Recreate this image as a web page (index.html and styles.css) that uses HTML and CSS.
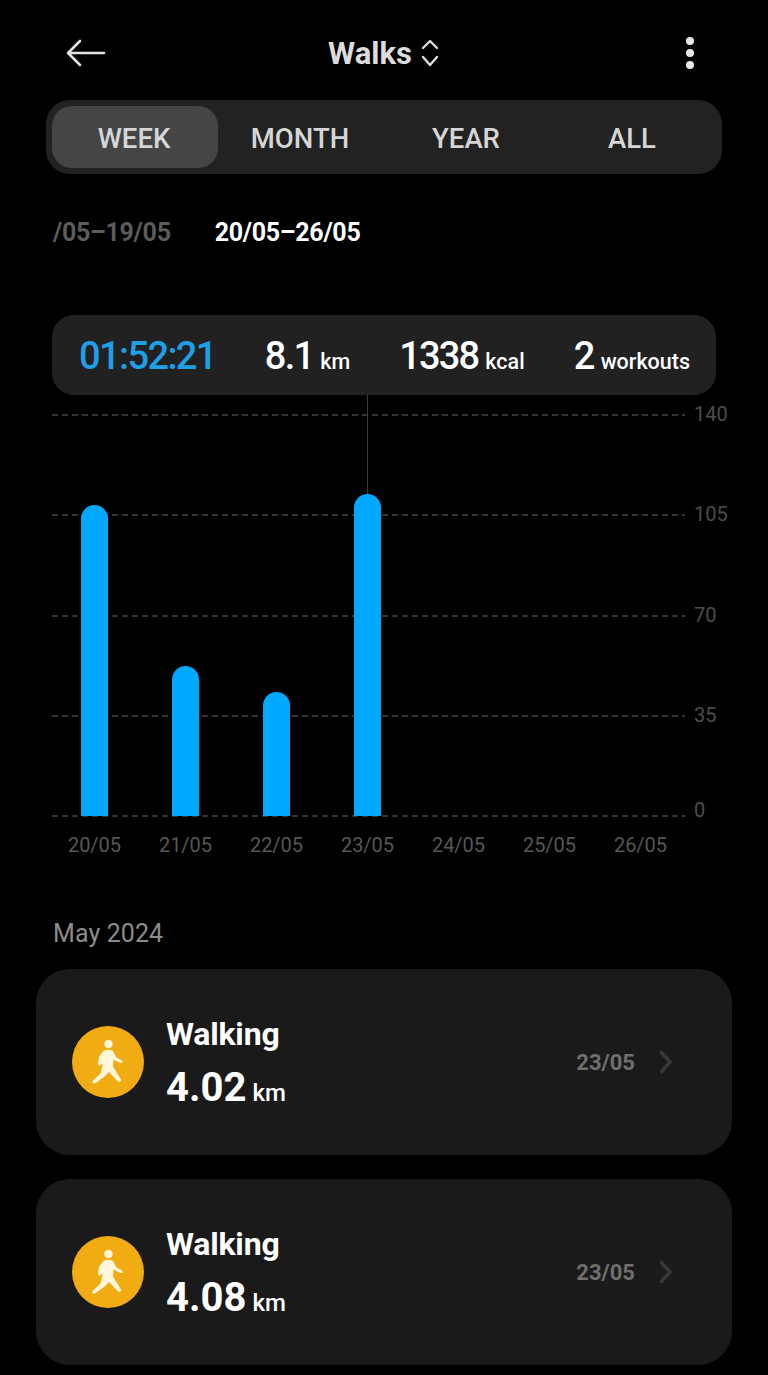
FILE: index.html
```html
<!DOCTYPE html>
<html lang="en">

<head>
    <meta charset="UTF-8">
    <title>Walks</title>
    <link rel="stylesheet" href="styles.css">
</head>

<body>
    <div class="header">
        <svg class="back" width="40" height="30" viewBox="0 0 40 30" fill="none" stroke="#e4e4e4" stroke-width="2.6" stroke-linecap="round" stroke-linejoin="round">
            <path d="M38 15H3M14 3L2 15l12 12" />
        </svg>
        <div class="title">
            <span>Walks</span>
            <svg width="20" height="30" viewBox="0 0 20 30" fill="none" stroke="#dcdcdc" stroke-width="2.4" stroke-linecap="round" stroke-linejoin="round">
                <path d="M3 10l7-7 7 7M3 19l7 8 7-8" />
            </svg>
        </div>
        <svg class="more" width="10" height="34" viewBox="0 0 10 34" fill="#e8e8e8">
            <circle cx="5" cy="5" r="4" />
            <circle cx="5" cy="17" r="4" />
            <circle cx="5" cy="29" r="4" />
        </svg>
    </div>

    <div class="tabs">
        <div class="tab active">WEEK</div>
        <div class="tab">MONTH</div>
        <div class="tab">YEAR</div>
        <div class="tab">ALL</div>
    </div>

    <div class="dates">
        <span class="date-old">/05–19/05</span>
        <span class="date-now">20/05–26/05</span>
    </div>

    <div class="stats">
        <div class="stat time"><span>01:52:21</span></div>
        <div class="stat"><span>8.1</span><small>km</small></div>
        <div class="stat"><span>1338</span><small>kcal</small></div>
        <div class="stat"><span>2</span><small>workouts</small></div>
    </div>

    <div class="chart">
        <div class="grid-row"><i></i><span>140</span></div>
        <div class="grid-row"><i></i><span>105</span></div>
        <div class="grid-row"><i></i><span>70</span></div>
        <div class="grid-row"><i></i><span>35</span></div>
        <div class="grid-row zero"><i></i><span>0</span></div>

        <div class="bars">
            <div class="day"><div class="bar" style="height: 311px"></div></div>
            <div class="day"><div class="bar" style="height: 150px"></div></div>
            <div class="day"><div class="bar" style="height: 124px"></div></div>
            <div class="day"><div class="marker"></div><div class="bar" style="height: 322px"></div></div>
            <div class="day"></div>
            <div class="day"></div>
            <div class="day"></div>
        </div>
    </div>

    <div class="days">
        <span>20/05</span>
        <span>21/05</span>
        <span>22/05</span>
        <span>23/05</span>
        <span>24/05</span>
        <span>25/05</span>
        <span>26/05</span>
    </div>

    <div class="month">May 2024</div>

    <div class="card">
        <div class="badge">
            <svg width="72" height="72" viewBox="0 0 72 72" fill="#fff6dc">
                <circle cx="36.5" cy="18" r="4.2" />
                <path d="M31.5 25c3-1.6 6.5-1.6 9.5 0l3.5 6.5 5.5 3c1.5 1.5 0 3-1.5 2.5l-7-3.5-.5 7 8 13c.5 2-1.5 3-3 2L37 46l-5 5-9 6.5c-2 .5-3.5-1-2.5-2.5l8.5-8 1.5-9-1-.5-1 2c-1.500.5-2.500-.5-2.500-2l1-7z" />
            </svg>
        </div>
        <div class="info">
            <div class="name">Walking</div>
            <div class="dist"><span>4.02</span><small>km</small></div>
        </div>
        <div class="when">23/05</div>
        <svg class="chev" width="14" height="24" viewBox="0 0 14 24" fill="none" stroke="#383838" stroke-width="3.6" stroke-linecap="round" stroke-linejoin="round">
            <path d="M3.5 2.5l8.5 9.5-8.5 9.5" />
        </svg>
    </div>

    <div class="card">
        <div class="badge">
            <svg width="72" height="72" viewBox="0 0 72 72" fill="#fff6dc">
                <circle cx="36.5" cy="18" r="4.2" />
                <path d="M31.5 25c3-1.6 6.5-1.6 9.5 0l3.5 6.5 5.5 3c1.5 1.5 0 3-1.5 2.5l-7-3.5-.5 7 8 13c.5 2-1.5 3-3 2L37 46l-5 5-9 6.5c-2 .5-3.5-1-2.5-2.5l8.5-8 1.5-9-1-.5-1 2c-1.500.5-2.500-.5-2.500-2l1-7z" />
            </svg>
        </div>
        <div class="info">
            <div class="name">Walking</div>
            <div class="dist"><span>4.08</span><small>km</small></div>
        </div>
        <div class="when">23/05</div>
        <svg class="chev" width="14" height="24" viewBox="0 0 14 24" fill="none" stroke="#383838" stroke-width="3.6" stroke-linecap="round" stroke-linejoin="round">
            <path d="M3.5 2.5l8.5 9.5-8.5 9.5" />
        </svg>
    </div>
</body>

</html>
```

FILE: styles.css
```css
body {
    margin: 0;
    height: 1375px;
    overflow: hidden;
    background: #000;
    color: #fff;
    font-family: Roboto, "Liberation Sans", sans-serif;
}

.header {
    display: grid;
    grid-template-columns: 1fr auto 1fr;
    align-items: center;
    height: 46px;
    margin-top: 30px;
    padding: 0 73px;
}

.back {
    margin-left: -7px;
}

.more {
    justify-self: end;
}

.title {
    display: flex;
    align-items: center;
    gap: 8px;
    font-size: 31px;
    font-weight: 700;
    color: #dcdcdc;
}

.tabs {
    display: grid;
    grid-template-columns: repeat(4, 166px);
    box-sizing: border-box;
    width: 676px;
    height: 74px;
    margin: 24px 0 0 46px;
    padding: 6px;
    border-radius: 24px;
    background: #222;
}

.tab {
    display: flex;
    align-items: center;
    justify-content: center;
    padding: 3px 2px 0 0;
    border-radius: 20px;
    font-size: 27.5px;
    font-weight: 500;
    color: #d6d6d6;
}

.tab.active {
    background: #454545;
}

.dates {
    display: flex;
    align-items: center;
    gap: 44px;
    height: 36px;
    margin: 40px 0 0 53px;
    font-size: 25px;
    font-weight: 700;
    letter-spacing: -0.3px;
}

.date-old {
    color: #5c5c5c;
}

.stats {
    display: flex;
    gap: 49px;
    box-sizing: border-box;
    width: 664px;
    height: 80px;
    margin: 65px 0 0 52px;
    padding: 19px 26px 0 27px;
    border-radius: 22px;
    background: #212121;
}

.stat {
    display: flex;
    align-items: baseline;
    gap: 7px;
    height: 44px;
    font-size: 38px;
    font-weight: 500;
    letter-spacing: -1.8px;
    line-height: 44px;
}

.stat small {
    font-size: 21.5px;
    letter-spacing: 0;
}

.stat:last-child {
    margin-left: auto;
}

.time {
    color: #1f9fe8;
    letter-spacing: -1.6px;
}

.chart {
    position: relative;
    display: flex;
    flex-direction: column;
    justify-content: space-between;
    height: 421px;
    margin: 10px 0 0 52px;
}

.grid-row {
    display: flex;
    align-items: center;
    gap: 9px;
    height: 20px;
}

.grid-row i {
    width: 633px;
    height: 2px;
    background: repeating-linear-gradient(90deg, #343434 0 6px, transparent 6px 10px);
}

.grid-row span {
    margin-bottom: 2px;
    font-size: 20px;
    color: #4c4c4c;
}

.grid-row.zero span {
    margin-bottom: 12px;
}

.bars {
    position: absolute;
    top: -10px;
    bottom: 10px;
    left: -3px;
    display: grid;
    grid-template-columns: repeat(7, 91px);
}

.day {
    display: flex;
    flex-direction: column;
    align-items: center;
    justify-content: flex-end;
}

.marker {
    flex: 1;
    width: 1px;
    background: #3a3a3a;
}

.bar {
    width: 27px;
    border-radius: 13.5px 13.5px 0 0;
    background: #00a8ff;
}

.days {
    display: grid;
    grid-template-columns: repeat(7, 91px);
    height: 24px;
    margin: 7px 0 0 49px;
    font-size: 20px;
    line-height: 24px;
    text-align: center;
    color: #565656;
}

.month {
    height: 32px;
    margin: 61px 0 19px 53px;
    font-size: 25px;
    letter-spacing: 0.1px;
    line-height: 32px;
    color: #8c8c8c;
}

.card {
    display: flex;
    align-items: center;
    height: 186px;
    margin: 0 36px 24px;
    padding: 0 60px 0 36px;
    border-radius: 34px;
    background: #1a1a1a;
}

.badge {
    width: 72px;
    height: 72px;
    margin-right: 22px;
    border-radius: 50%;
    background: #f0ac12;
}

.badge svg {
    display: block;
}

.info {
    flex: 1;
    padding-top: 5px;
}

.name {
    font-size: 32px;
    font-weight: 700;
    letter-spacing: -0.2px;
    line-height: 44px;
}

.dist {
    display: flex;
    align-items: baseline;
    gap: 6px;
    margin-top: 7px;
    font-size: 40px;
    font-weight: 700;
    line-height: 50px;
}

.dist small {
    font-size: 24px;
    font-weight: 500;
}

.when {
    margin-right: 23px;
    font-size: 22px;
    font-weight: 700;
    color: #6f6f6f;
}

.chev {
    display: block;
}
```
